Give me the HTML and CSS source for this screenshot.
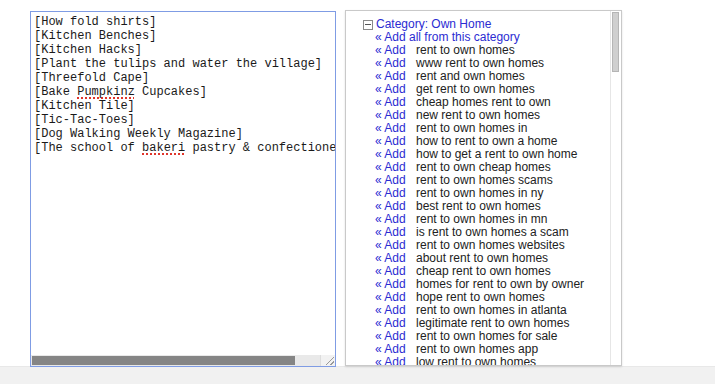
FILE: index.html
```html
<!DOCTYPE html>
<html lang="en">
<head>
  <meta charset="UTF-8">
  <title>Keyword Tool</title>
  <link rel="stylesheet" href="styles.css">
</head>
<body>

  <div class="page">
    <div class="editor">
      <div class="editor-text">[How fold shirts]
[Kitchen Benches]
[Kitchen Hacks]
[Plant the tulips and water the village]
[Threefold Cape]
[Bake <span class="misspelled">Pumpkinz</span> Cupcakes]
[Kitchen Tile]
[Tic-Tac-Toes]
[Dog Walking Weekly Magazine]
[The school of <span class="misspelled">bakeri</span> pastry &amp; confectionery]</div>
      <div class="hscroll">
        <div class="hscroll-track"><div class="hscroll-thumb"></div></div>
        <div class="resizer"></div>
      </div>
    </div>

    <div class="ideas">
      <div class="ideas-list">
        <div class="category"><span class="toggle"></span><a href="#">Category: Own Home</a></div>
        <div class="add-all"><a href="#">« Add all from this category</a></div>
        <ul id="keywordList" class="keywords">
          <!-- filled by script -->
        </ul>
      </div>
      <div class="vscroll"><div class="vscroll-thumb"></div></div>
    </div>
  </div>

  <div class="footer-band"></div>

  <script>
    const keywords = [
      "rent to own homes",
      "www rent to own homes",
      "rent and own homes",
      "get rent to own homes",
      "cheap homes rent to own",
      "new rent to own homes",
      "rent to own homes in",
      "how to rent to own a home",
      "how to get a rent to own home",
      "rent to own cheap homes",
      "rent to own homes scams",
      "rent to own homes in ny",
      "best rent to own homes",
      "rent to own homes in mn",
      "is rent to own homes a scam",
      "rent to own homes websites",
      "about rent to own homes",
      "cheap rent to own homes",
      "homes for rent to own by owner",
      "hope rent to own homes",
      "rent to own homes in atlanta",
      "legitimate rent to own homes",
      "rent to own homes for sale",
      "rent to own homes app",
      "low rent to own homes",
      "rent to own homes listings"
    ];

    const list = document.getElementById('keywordList');
    keywords.forEach(k => {
      const li = document.createElement('li');
      li.innerHTML = `<a href="#">« Add</a><span class="kw">${k}</span>`;
      list.appendChild(li);
    });
  </script>

</body>
</html>
```

FILE: styles.css
```css
html, body {
  margin: 0;
  padding: 0;
  background: #fff;
}
body {
  width: 715px;
  height: 384px;
  overflow: hidden;
}
.page {
  display: flex;
  align-items: flex-start;
  height: 366px;
  padding-top: 10px;
  box-sizing: border-box;
}

/* left: keyword textarea */
.editor {
  margin-left: 30px;
  margin-top: 1px;
  width: 306px;
  height: 356px;
  border: 1px solid #7f9ce4;
  box-sizing: border-box;
  display: flex;
  flex-direction: column;
  background: #fff;
}
.editor-text {
  flex: 1;
  padding: 3px 0 0 3px;
  font-family: "Liberation Mono", monospace;
  font-size: 12px;
  line-height: 14px;
  color: #1a1a1a;
  white-space: pre;
  overflow: hidden;
}
.misspelled {
  text-decoration: underline dotted #e0352b;
  text-decoration-thickness: 2px;
  text-underline-offset: 2px;
}
.hscroll {
  display: flex;
  height: 11px;
}
.hscroll-track {
  flex: 1;
  background: #e9e9e9;
  padding: 1px 0 0 1px;
}
.hscroll-thumb {
  width: 263px;
  height: 9px;
  background: #858585;
}
.resizer {
  width: 14px;
  height: 11px;
  background: #f2f2f2;
  border-left: 1px solid #ddd;
  position: relative;
}
.resizer::after {
  content: "";
  position: absolute;
  right: 1px;
  bottom: 1px;
  width: 8px;
  height: 8px;
  background: linear-gradient(135deg, transparent 45%, #999 45%, #999 55%, transparent 55%, transparent 72%, #999 72%, #999 82%, transparent 82%);
}

/* right: keyword ideas */
.ideas {
  margin-left: 9px;
  width: 277px;
  height: 356px;
  border: 1px solid #c9c9c9;
  box-shadow: 0 1px 2px rgba(0, 0, 0, 0.12);
  box-sizing: border-box;
  display: flex;
  overflow: hidden;
  background: #fff;
}
.ideas-list {
  flex: 1;
  padding: 7px 0 0 17px;
  font-family: "Liberation Sans", Arial, sans-serif;
  font-size: 12px;
  line-height: 13px;
  color: #222;
  overflow: hidden;
}
.ideas-list a {
  color: #2b2bd2;
  text-decoration: none;
}
.category {
  display: flex;
  align-items: center;
}
.toggle {
  width: 8px;
  height: 8px;
  border: 1px solid #8a8a8a;
  margin-right: 3px;
  position: relative;
  background: #fff;
}
.toggle::after {
  content: "";
  position: absolute;
  left: 1px;
  right: 1px;
  top: 3px;
  height: 1px;
  background: #555;
}
.add-all {
  padding-left: 12px;
}
.keywords {
  list-style: none;
  margin: 0;
  padding: 0 0 0 12px;
}
.keywords li {
  display: flex;
  white-space: nowrap;
}
.keywords li a {
  width: 41px;
  flex-shrink: 0;
}
.vscroll {
  width: 10px;
  background: #fff;
  border-left: 1px solid #e6e6e6;
  padding-top: 1px;
}
.vscroll-thumb {
  width: 7px;
  height: 60px;
  margin-left: 1px;
  background: #cfcfcf;
  border: 1px solid #b5b5b5;
  box-sizing: border-box;
}

.footer-band {
  height: 18px;
  background: #f1f1f1;
  border-top: 1px solid #e8e8e8;
  box-sizing: border-box;
}
```
